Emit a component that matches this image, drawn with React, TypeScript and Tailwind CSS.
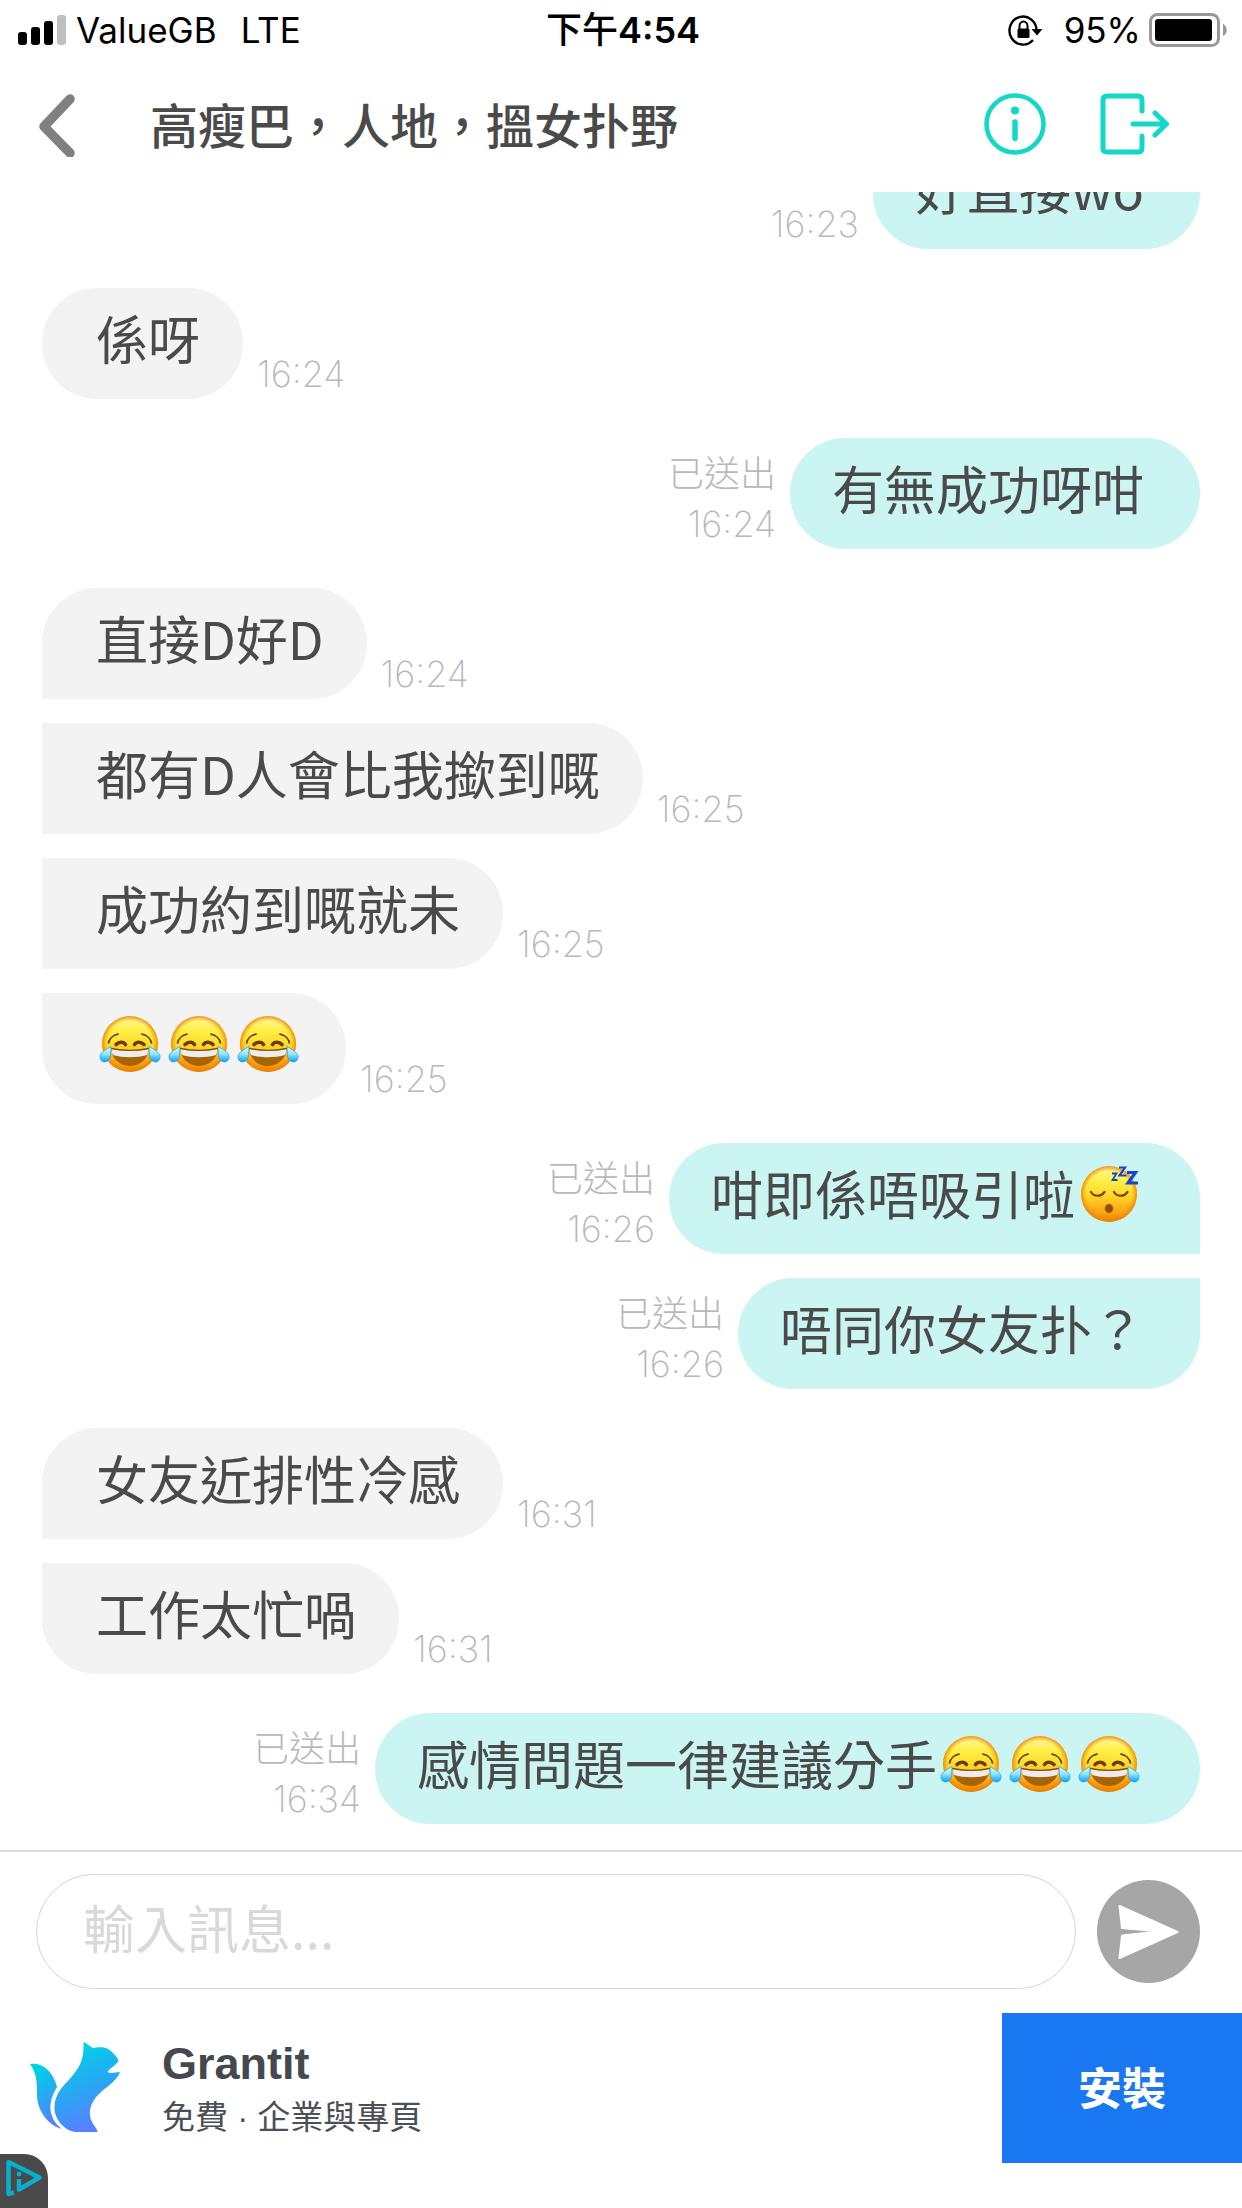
type Message = {
  text: string;
  time: string;
  mine?: boolean;
  corners: string;
};

const messages: Message[] = [
  { text: "好直接wo", time: "16:23", mine: true, corners: "rounded-[55px]" },
  { text: "係呀", time: "16:24", corners: "rounded-[55px]" },
  { text: "有無成功呀咁", time: "16:24", mine: true, corners: "rounded-[55px]" },
  { text: "直接D好D", time: "16:24", corners: "rounded-[55px] rounded-bl-none" },
  { text: "都有D人會比我撳到嘅", time: "16:25", corners: "rounded-r-[55px]" },
  { text: "成功約到嘅就未", time: "16:25", corners: "rounded-r-[55px]" },
  { text: "😂😂😂", time: "16:25", corners: "rounded-[55px] rounded-tl-none" },
  { text: "咁即係唔吸引啦😴", time: "16:26", mine: true, corners: "rounded-[55px] rounded-br-none" },
  { text: "唔同你女友扑？", time: "16:26", mine: true, corners: "rounded-[55px] rounded-tr-none" },
  { text: "女友近排性冷感", time: "16:31", corners: "rounded-[55px] rounded-bl-none" },
  { text: "工作太忙喎", time: "16:31", corners: "rounded-[55px] rounded-tl-none" },
  { text: "感情問題一律建議分手😂😂😂", time: "16:34", mine: true, corners: "rounded-[55px]" },
];

function EmojiDefs() {
  return (
    <svg className="absolute w-0 h-0" aria-hidden="true">
      <defs>
        <linearGradient id="face" x1="0" y1="0" x2="0" y2="1">
          <stop offset="0" stopColor="#fff6a0" />
          <stop offset="0.25" stopColor="#fff04a" />
          <stop offset="0.5" stopColor="#ffdc2c" />
          <stop offset="0.8" stopColor="#ffa814" />
          <stop offset="1" stopColor="#e88204" />
        </linearGradient>
        <radialGradient id="rim" cx="0.5" cy="0.5" r="0.5">
          <stop offset="0.82" stopColor="#f58a00" stopOpacity="0" />
          <stop offset="1" stopColor="#ee7e00" stopOpacity="0.85" />
        </radialGradient>
        <linearGradient id="tear" x1="0" y1="0" x2="0" y2="1">
          <stop offset="0" stopColor="#e4fbff" />
          <stop offset="0.5" stopColor="#8fe3ff" />
          <stop offset="1" stopColor="#109cfa" />
        </linearGradient>
      </defs>
    </svg>
  );
}

function JoyEmoji() {
  return (
    <svg viewBox="0 0 69 69" className="w-[69px] h-[69px] shrink-0" role="img" aria-label="😂">
      <circle cx="34" cy="35" r="28" fill="url(#face)" />
      <circle cx="34" cy="35" r="28" fill="url(#rim)" />
      <path d="M12.500 34c1-4 4.500-8 9.500-8.800M55.500 34c-1-4-4.500-8-9.500-8.800" fill="none" stroke="#6f3b00" strokeWidth="1.700" strokeLinecap="round" />
      <path d="M20 35.500c3-3 7.500-3 9.500 0M38.500 35.500c2-3 6.500-3 9.500 0" fill="none" stroke="#6f3b00" strokeWidth="3.600" strokeLinecap="round" />
      <path d="M15.500 39.500c12 2.400 25 2.400 37 0c.5 9-7.500 17.500-18.500 17.500S15 48.500 15.500 39.500z" fill="#a66406" />
      <path d="M15.500 39.500c12 2.400 25 2.400 37 0c0 2.500-.5 4.500-1.500 6.500c-10 3-24 3-34 0c-1-2-1.500-4-1.500-6.500z" fill="#ececec" />
      <path d="M15.500 39.500c12 2.400 25 2.400 37 0" fill="none" stroke="#874f05" strokeWidth="1.400" strokeLinecap="round" />
      <path d="M15 37.500c-4 2.500-11 5.500-11 10.500c0 7 9.500 6.500 10.500-1z" fill="url(#tear)" stroke="#1aa8f8" strokeWidth="0.800" />
      <path d="M53 37.500c4 2.500 11 5.500 11 10.500c0 7-9.500 6.500-10.500-1z" fill="url(#tear)" stroke="#1aa8f8" strokeWidth="0.800" />
    </svg>
  );
}

function SleepEmoji() {
  return (
    <svg viewBox="0 0 69 69" className="w-[69px] h-[69px] shrink-0" role="img" aria-label="😴">
      <circle cx="34" cy="35" r="28" fill="url(#face)" />
      <circle cx="34" cy="35" r="28" fill="url(#rim)" />
      <path d="M16 33c3 5 10 5 13.500 0M39 33c3 5 10 5 13.500 0" fill="none" stroke="#7a4300" strokeWidth="2.200" strokeLinecap="round" />
      <ellipse cx="34" cy="49.500" rx="4" ry="4.400" fill="#8a5208" stroke="#b8700a" strokeWidth="1" />
      <g fill="none" stroke="#1147d1">
        <path d="M37 14.500h4.500l-4 6.500h5" strokeWidth="1.800" />
        <path d="M44 8.500h6l-5.500 8h7" strokeWidth="2.200" />
        <path d="M52 13.500h8.500l-7.500 10.500h10" strokeWidth="3.200" />
      </g>
    </svg>
  );
}

function BubbleText({ text }: { text: string }) {
  const parts = text.split(/(😂|😴)/u).filter(Boolean);
  return (
    <>
      {parts.map((part, i) => {
        if (part === "😂") return <JoyEmoji key={i} />;
        if (part === "😴") return <SleepEmoji key={i} />;
        return <span key={i}>{part}</span>;
      })}
    </>
  );
}

// wider gap whenever the sender changes
function rowGap(index: number) {
  if (index === 0) return "";
  return messages[index].mine === messages[index - 1].mine ? "mt-6" : "mt-[39px]";
}

function StatusBar() {
  return (
    <div className="grid grid-cols-[1fr_auto_1fr] items-center h-[60px] pl-[18px] pr-[14px] text-[35px] leading-[60px] text-black font-[Inter,'Noto_Sans_CJK_TC',sans-serif]">
      <div className="flex items-center">
        <svg viewBox="0 0 48 30" className="w-12 h-[30px] mr-[10px]" aria-hidden="true">
          <rect x="0" y="17" width="9" height="13" rx="3" />
          <rect x="13" y="12" width="9" height="18" rx="3" />
          <rect x="26" y="6" width="9" height="24" rx="3" />
          <rect x="39" y="0" width="9" height="30" rx="3" fill="#bfbfbf" />
        </svg>
        <span>ValueGB</span>
        <span className="ml-6">LTE</span>
      </div>
      <div className="text-center text-[36px] font-semibold">
        <span className="font-medium">下午</span>4:54
      </div>
      <div className="flex items-center justify-end">
        <svg viewBox="0 0 36 32" className="w-9 h-8 mr-5" aria-hidden="true">
          <path d="M28.500 17A13.500 14 0 1 0 25 26" fill="none" stroke="#000" strokeWidth="2.400" />
          <path d="M23.500 15h11l-5.500 6.500z" />
          <rect x="9.500" y="14.500" width="12" height="9.500" rx="1.500" />
          <path d="M11.500 15v-3a4 4.500 0 0 1 8 0v3" fill="none" stroke="#000" strokeWidth="2" />
        </svg>
        <span className="mr-2">95%</span>
        <svg viewBox="0 0 79 34" className="w-[79px] h-[34px]" aria-hidden="true">
          <rect x="1.500" y="1.500" width="68" height="31" rx="7" fill="none" stroke="#999" strokeWidth="3" />
          <rect x="6" y="6" width="57" height="22" rx="3" />
          <path d="M74 11c5 2 5 10 0 12z" fill="#999" />
        </svg>
      </div>
    </div>
  );
}

function Header() {
  return (
    <header className="flex items-center h-[132px] pl-[36px] pr-[72px] pb-1">
      <button aria-label="返回" className="w-[42px] h-[66px]">
        <svg viewBox="0 0 42 66" className="w-[42px] h-[66px]" fill="none" stroke="#808080" strokeWidth="9.500" strokeLinecap="round" strokeLinejoin="round">
          <path d="M34 8L8 35.500L34 62" />
        </svg>
      </button>
      <h1 className="ml-[72px] flex-1 pb-[2px] text-[48px] leading-[60px] font-medium text-[#4a4a4a]">
        高瘦巴，人地，搵女扑野
      </h1>
      <button aria-label="資訊" className="w-[62px] h-[62px]">
        <svg viewBox="0 0 62 62" className="w-[62px] h-[62px]" fill="none" stroke="#13d8c7">
          <circle cx="31" cy="31" r="28.500" strokeWidth="4.600" />
          <circle cx="31" cy="17.500" r="4" fill="#13d8c7" stroke="none" />
          <path d="M31 29v16.500" strokeWidth="5.500" strokeLinecap="round" />
        </svg>
      </button>
      <button aria-label="離開" className="ml-[54px] w-[70px] h-[62px]">
        <svg viewBox="0 0 70 62" className="w-[70px] h-[62px]" fill="none" stroke="#13d8c7" strokeWidth="5" strokeLinecap="round" strokeLinejoin="round">
          <path d="M42 18V7q0-4-4-4H7q-4 0-4 4v48q0 4 4 4h31q4 0 4-4V43" />
          <path d="M33 31h33M55 20l11.500 11L55 42" />
        </svg>
      </button>
    </header>
  );
}

function MessageRow({ message, gap }: { message: Message; gap: string }) {
  const { text, time, mine, corners } = message;
  return (
    <li className={`flex items-end ${mine ? "flex-row-reverse" : ""} gap-[14px] ${gap}`}>
      <div
        className={`flex items-center h-[111px] pb-[11px] text-[52px] leading-[72px] whitespace-nowrap text-[#4a4a4a] ${corners} ${
          mine ? "bg-[#cbf5f2] pl-[42px] pr-[56px]" : "bg-[#f3f3f3] pl-[54px] pr-[43px]"
        }`}
      >
        <BubbleText text={text} />
      </div>
      <div className="flex flex-col items-end text-[36px] leading-[50px] font-extralight text-[#b8b8b8] font-[Inter,'Noto_Sans_CJK_TC',sans-serif]">
        {mine && <span>已送出</span>}
        <time>{time}</time>
      </div>
    </li>
  );
}

function Composer() {
  return (
    <form className="flex items-center border-t-2 border-[#d9d9d9] pt-[22px] pl-9 pr-[42px]" onSubmit={(e) => e.preventDefault()}>
      <input
        type="text"
        aria-label="輸入訊息"
        placeholder="輸入訊息..."
        className="flex-1 min-w-0 h-[115px] pl-[46px] pr-12 pb-[10px] rounded-full border border-[#d4d4d4] text-[52px] text-[#4a4a4a] placeholder:text-[#d9d9d9] outline-none"
      />
      <button type="submit" aria-label="傳送" className="ml-[21px] w-[103px] h-[103px]">
        <svg viewBox="0 0 103 103" className="w-[103px] h-[103px]">
          <circle cx="51.500" cy="51.500" r="51.500" fill="#a6a6a6" />
          <path
            d="M22.500 26L80.500 52L22.500 78L25 55.500L53 51.500L25 48.500z"
            fill="#fff"
            stroke="#fff"
            strokeWidth="2"
            strokeLinejoin="round"
          />
          <path d="M24 49L53 51.500L24 54.500z" fill="#a6a6a6" />
        </svg>
      </button>
    </form>
  );
}

function AdBanner() {
  return (
    <aside className="relative flex items-start mt-6 h-[195px]">
      <div className="flex items-center flex-1 h-[150px] pl-[24px]">
        <svg viewBox="0 0 104 104" className="w-[104px] h-[104px]" aria-hidden="true">
          <defs>
            <linearGradient id="squirrel" x1="0.200" y1="0" x2="0.500" y2="1">
              <stop offset="0.100" stopColor="#00d0e6" />
              <stop offset="0.550" stopColor="#2aa6f4" />
              <stop offset="1" stopColor="#5b7eff" />
            </linearGradient>
          </defs>
          <g fill="url(#squirrel)">
            <path d="M59.500 6C63 7 66 11 69 12C79 10 84 12 88 16C92 20 94 22 94.500 25C92 29 87 31 83.500 36C87 38 92 36 96 36C92 46 83 50 76 57C65 67 64 78 68 86C70 90 73 92 73.500 96H51C39 94 30 82 30.500 71C31 55 43 47 49 39C58 28 60 20 59.500 6z" />
            <path d="M6 28C17 26 29 34 33 51C28 59 24 70 28 80C30 86 34 90 38 93C24 89 16 77 13.500 65C12 52 15 40 6 28z" />
          </g>
        </svg>
        <div className="ml-[34px] pt-2 text-[#444950]">
          <p className="text-[45px] leading-[52px] font-bold font-['Liberation_Sans',sans-serif]">Grantit</p>
          <p className="text-[33px] leading-[56px] text-[#4b4f56] font-['Liberation_Sans','Noto_Sans_CJK_TC',sans-serif]">免費 · 企業與專頁</p>
        </div>
      </div>
      <button className="w-[240px] h-[150px] pb-1 bg-[#1a77f2] text-white text-[44px] font-bold">安裝</button>
      <a href="#adchoices" aria-label="AdChoices" className="absolute left-0 bottom-0 w-12 h-[54px] bg-[#4a4a4a] rounded-tr-[24px]">
        <svg viewBox="0 0 48 54" className="w-12 h-[54px]" fill="none" stroke="#06afcb" strokeWidth="4.500" strokeLinejoin="round">
          <path d="M14 38.500L8.500 40V8L39.500 23.500L19 35.500V25" />
          <circle cx="19" cy="20" r="2.400" fill="#06afcb" stroke="none" />
        </svg>
      </a>
    </aside>
  );
}

export default function App() {
  return (
    <div className="relative flex flex-col h-screen bg-white overflow-hidden font-['Noto_Sans_CJK_TC',sans-serif]">
      <EmojiDefs />
      <StatusBar />
      <Header />
      <main className="flex flex-col justify-end flex-1 min-h-0 overflow-hidden px-[42px] pb-[26px]">
        <ul>
          {messages.map((message, i) => (
            <MessageRow key={i} message={message} gap={rowGap(i)} />
          ))}
        </ul>
      </main>
      <Composer />
      <AdBanner />
    </div>
  );
}
